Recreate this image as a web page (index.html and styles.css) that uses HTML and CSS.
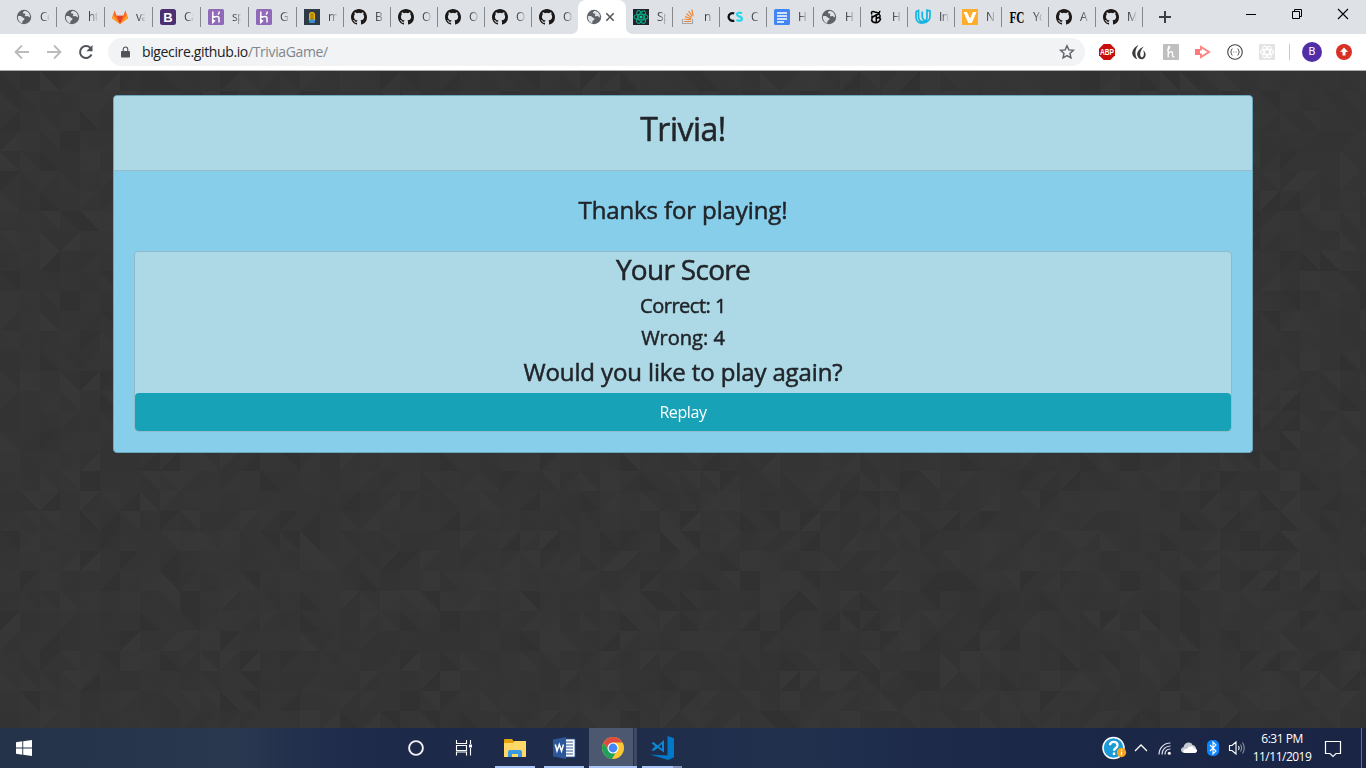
FILE: index.html
```html
<!DOCTYPE html>
<html lang="en">
<head>
<meta charset="utf-8">
<title>Trivia!</title>
<link rel="stylesheet" href="styles.css">
</head>
<body>
<svg class="defs" aria-hidden="true">
  <symbol id="globe" viewBox="0 0 16 16"><circle cx="8" cy="8" r="7.200" fill="#5f6368"/><path d="M2 7.300c2-.5 3.700-.1 4.400.9.700.9 2.200.4 2.100 1.700-.1 1.500-1.800.9-2.100 2.500-.1.800 0 1.200-.3 1.800C3.300 13.300 1.500 10.500 2 7.300zM8.300 2c-.6.600-1.600.9-1.200 1.900.5.900 1.800.3 2.200 1.200.3.900-.8 1.100-.3 1.900.8 1 2.200-.4 3.100.2.700.600.9 1.300 1.800 1.100C14.300 4.600 11.800 2 8.300 2z" fill="#dee1e6"/></symbol>
  <symbol id="github" viewBox="0 0 16 16"><path d="M8 0C3.580 0 0 3.580 0 8c0 3.540 2.290 6.530 5.470 7.590.4.070.55-.17.55-.38v-1.490c-2.010.37-2.530-.49-2.690-.94-.09-.23-.48-.94-.82-1.130-.28-.15-.68-.52-.01-.53.63-.01 1.080.58 1.230.82.72 1.210 1.870.87 2.330.66.070-.52.28-.87.51-1.070-1.780-.2-3.640-.89-3.640-3.950 0-.87.31-1.590.82-2.150-.08-.2-.36-1.020.08-2.120 0 0 .67-.21 2.200.82a7.600 7.600 0 0 1 4 0c1.530-1.040 2.200-.82 2.200-.82.44 1.100.16 1.920.08 2.120.51.560.82 1.270.82 2.150 0 3.070-1.870 3.750-3.650 3.950.29.250.54.730.54 1.480v2.200c0 .21.15.46.55.38A8.010 8.010 0 0 0 16 8c0-4.420-3.580-8-8-8z" fill="#1b1817"/></symbol>
  <symbol id="heroku" viewBox="0 0 16 16"><rect width="16" height="16" rx="1.500" fill="#9069b8"/><path d="M4.800 2.500v6.200c3-1.500 6.200-1.800 6.200.5v4.300M11.300 2.500c0 1.300-.5 2.200-1.300 3M4.700 10.500v3l1.700-1.500z" fill="none" stroke="#fff" stroke-width="1.500"/></symbol>
</svg>

<header class="tabs">
  <div class="tab wide"><svg><use href="#globe"/></svg><span>Co</span></div>
  <div class="tab wide"><svg><use href="#globe"/></svg><span>htt</span></div>
  <div class="tab wide"><svg viewBox="0 0 16 16"><path d="M8 15L0 9.200 2.500 1.200l2.300 5.500h6.400l2.300-5.500L16 9.200z" fill="#fc6d26"/><path d="M8 15L4.800 6.700h6.400z" fill="#e24329"/><path d="M0 9.200l1-3.500L8 15zM16 9.200l-1-3.500L8 15z" fill="#fca326"/></svg><span>va</span></div>
  <div class="tab wide"><svg viewBox="0 0 16 16"><rect width="16" height="16" rx="2.500" fill="#4b2f72"/><text class="glyph" x="8" y="12.500" font-size="13" fill="#fff">B</text></svg><span>Ca</span></div>
  <div class="tab wide"><svg><use href="#heroku"/></svg><span>sp</span></div>
  <div class="tab wide"><svg><use href="#heroku"/></svg><span>G</span></div>
  <div class="tab"><svg viewBox="0 0 16 16"><path d="M0 0h16v16H0z" fill="#2e3a46"/><path d="M5 11V6a3 3 0 0 1 6 0v5z" fill="#f6b800"/><path d="M7 5h2v5H7z" fill="none" stroke="#66591b" stroke-width=".8"/><path d="M4.500 10.500h7l-1 3.500h-5z" fill="#3d8fcb"/></svg><span>m</span></div>
  <div class="tab"><svg><use href="#github"/></svg><span>B</span></div>
  <div class="tab"><svg><use href="#github"/></svg><span>O</span></div>
  <div class="tab"><svg><use href="#github"/></svg><span>O</span></div>
  <div class="tab"><svg><use href="#github"/></svg><span>O</span></div>
  <div class="tab last"><svg><use href="#github"/></svg><span>O</span></div>
  <div class="tab active"><svg><use href="#globe"/></svg><svg class="close" viewBox="0 0 8 8"><path d="M.3.3l7.400 7.400m0-7.400L.3 7.700" stroke="#55595e" stroke-width="1.600"/></svg></div>
  <div class="tab"><svg viewBox="0 0 16 16"><path d="M0 0h16v16H0z" fill="#20232a"/><g fill="none" stroke="#0aa884" stroke-width="1.100"><ellipse cx="8" cy="8" rx="7" ry="2.800"/><ellipse cx="8" cy="8" rx="7" ry="2.800" transform="rotate(60 8 8)"/><ellipse cx="8" cy="8" rx="7" ry="2.800" transform="rotate(120 8 8)"/></g><circle cx="8" cy="8" r="1.500" fill="#0fcf9c"/></svg><span>Sp</span></div>
  <div class="tab"><svg viewBox="0 0 16 16"><path d="M2.500 10v4.500h10V10" fill="none" stroke="#a3a8ae" stroke-width="1.200"/><path d="M4.300 12.500h6.500M4.400 10l6.400.8M5 7.500l6 2.200M6.400 4.700l5.200 3.900M8.600 2.200l3.900 5.300M11.700.5l1.500 6.200" stroke="#f4812a" stroke-width="1.100"/></svg><span>n</span></div>
  <div class="tab"><svg viewBox="0 0 16 16"><path d="M7.200 4.500A3.900 3.900 0 1 0 7.200 11.500" fill="none" stroke="#111" stroke-width="2.300"/><path d="M15 4.300c-1.300-.8-5-1-5 1.200 0 2.500 5 1.800 5 4.200 0 2.400-3.800 2.300-5.500 1.300" fill="none" stroke="#25d5ec" stroke-width="2.200"/></svg><span>C</span></div>
  <div class="tab"><svg viewBox="0 0 16 16"><rect width="16" height="16" rx="1.500" fill="#4285f4"/><path d="M3 4h10M3 7h10M3 10h10M3 13h7" stroke="#fff" stroke-width="1.500"/></svg><span>H</span></div>
  <div class="tab"><svg><use href="#globe"/></svg><span>H</span></div>
  <div class="tab"><svg viewBox="0 0 16 16"><path d="M4 5.500C2.500 3.500 4 2 6 2.700l3.500 1.100c1.500.3 2.500-.5 2.200-2M8.300 5v8M4 6.500v4M4 8.500L8 6l4-1M12 6v2L8 9.500M3.500 10.500c.8 4 7.500 4.500 9-.5L11 8.700" fill="none" stroke="#000" stroke-width="1.500"/></svg><span>H</span></div>
  <div class="tab"><svg viewBox="0 0 16 16"><path d="M1 2.500l2.500-1v6.500c0 3 2 5 4.500 4.500M1 2.500v5.700c0 4 3 6.500 7 5.800 4-.6 7-2.700 7-6.800V2l-3-.9v7.400c0 2.500-1.500 4-4 4M7.200 2.500v4.800c0 2.700 1.500 4.500 4 3.800" fill="none" stroke="#13b5e2" stroke-width="1.700"/></svg><span>In</span></div>
  <div class="tab"><svg viewBox="0 0 16 16"><path d="M0 0h16v16H0z" fill="#fdac2b"/><path d="M1.500 3H5l3 6.500L11 3h3.500L9.800 14H6.300z" fill="#fff"/></svg><span>N</span></div>
  <div class="tab"><svg viewBox="0 0 16 16"><text class="serif" x="8" y="13.500" font-size="17" textLength="15" lengthAdjust="spacingAndGlyphs">FC</text></svg><span>Yo</span></div>
  <div class="tab"><svg><use href="#github"/></svg><span>A</span></div>
  <div class="tab"><svg><use href="#github"/></svg><span>M</span></div>
  <svg class="newtab" viewBox="0 0 12 12"><path d="M6 0v12M0 6h12" stroke="#3c4043" stroke-width="2"/></svg>
  <div class="window-buttons">
    <svg viewBox="0 0 10 10"><path d="M0 5.500h10" stroke="#000"/></svg>
    <svg viewBox="0 0 10 10"><path d="M.5 2.500h7v7h-7zM2.500 2.500v-2h7v7h-2" fill="none" stroke="#000"/></svg>
    <svg viewBox="0 0 10 10"><path d="M0 0l10 10M10 0L0 10" stroke="#000" stroke-width="1.100"/></svg>
  </div>
</header>

<nav class="toolbar">
  <svg class="nav-icon" viewBox="0 0 16 16"><path d="M15 8H2M8 1.500L1.500 8 8 14.500" fill="none" stroke="#b9bbbd" stroke-width="1.800"/></svg>
  <svg class="nav-icon" viewBox="0 0 16 16"><path d="M1 8h13M8 1.500L14.500 8 8 14.500" fill="none" stroke="#b9bbbd" stroke-width="1.800"/></svg>
  <svg class="nav-icon" viewBox="0 0 16 16"><path d="M13.500 10.500A6 6 0 1 1 12.300 3.800" fill="none" stroke="#505459" stroke-width="2"/><path d="M14.500 1v6.300H8.300z" fill="#505459"/></svg>
  <div class="omnibox">
    <svg class="lock" viewBox="0 0 10 12"><path d="M1 4.800h8q1 0 1 1V11q0 1-1 1H1q-1 0-1-1V5.800q0-1 1-1z" fill="#505459"/><path d="M2.500 5V3a2.500 2.500 0 0 1 5 0v2" fill="none" stroke="#505459" stroke-width="1.200"/></svg>
    <span class="url">bigecire.github.io<em>/TriviaGame/</em></span>
    <svg class="star" viewBox="0 0 16 16"><path d="M8 1.700l1.850 4.200 4.550.45-3.400 3.050.95 4.500L8 11.600l-3.950 2.300.95-4.500L1.600 6.350l4.550-.45z" fill="none" stroke="#5f6368" stroke-width="1.400"/></svg>
  </div>
  <div class="extensions">
    <svg viewBox="0 0 16 16"><path d="M4.700 0h6.600L16 4.700v6.600L11.300 16H4.700L0 11.300V4.700z" fill="#c70d0d"/><text class="glyph" x="8" y="11" font-size="8.500" fill="#fff" textLength="14" lengthAdjust="spacingAndGlyphs">ABP</text></svg>
    <svg viewBox="0 0 16 16"><path d="M7.500 1C3.500 3 .8 6.500 1.300 10c.4 2.500 2.500 4.500 5 5.300C3.500 10.500 3.800 5.500 7.500 1zM12.800 2.500C7.500 4.800 5.300 8.800 6.500 12c.8 2.500 3.500 4 5.500 3 3.500-1.800 3.500-6.500.2-8.500 1.300 3 .8 6.300-1.200 7C8.300 12.500 8.500 7 12.800 2.500z" fill="#3a3b3d"/></svg>
    <svg viewBox="0 0 16 16"><rect width="16" height="16" rx="1" fill="#bfbfbf"/><path d="M4 6.500c2-1 3.200-3 2.500-4S5 4 5.200 7v6.500M5.200 10c2-3 4.300-3.300 4.300-.5 0 2-.5 4 2 3" fill="none" stroke="#fff" stroke-width="1.300"/></svg>
    <svg viewBox="0 0 16 16"><path d="M0 5h5v6H0z" fill="#ff7b7b"/><path d="M6 6.500V3l8 5-8 5V9.500" fill="none" stroke="#ff8585" stroke-width="2"/></svg>
    <svg viewBox="0 0 16 16"><circle cx="8" cy="8" r="7.300" fill="#fff" stroke="#42474b" stroke-width="1.100"/><path d="M5.500 4.800c-1.300 0-1 1.500-1.200 2.300L3.500 8l.8.900c.2.800-.1 2.300 1.200 2.300M10.500 4.800c1.300 0 1 1.500 1.200 2.300l.8.900-.8.900c-.2.800.1 2.300-1.200 2.300M6.500 8h.7M8.800 8h.7" fill="none" stroke="#42474b"/></svg>
    <svg viewBox="0 0 16 16"><path d="M0 0h16v16H0z" fill="#e4e4e4"/><g fill="none" stroke="#fff" stroke-width="1.100"><ellipse cx="8" cy="8" rx="6.500" ry="2.600"/><ellipse cx="8" cy="8" rx="6.500" ry="2.600" transform="rotate(60 8 8)"/><ellipse cx="8" cy="8" rx="6.500" ry="2.600" transform="rotate(120 8 8)"/></g></svg>
  </div>
  <i class="rule"></i>
  <div class="avatar">B</div>
  <svg class="update" viewBox="0 0 16 16"><circle cx="8" cy="8" r="8" fill="#d93025"/><path d="M8 3.500l4 4.500H9.500v3.500h-3V8H4z" fill="#fff"/></svg>
</nav>

<main class="page">
  <canvas class="pattern" width="1366" height="657"></canvas>
  <section class="card">
    <div class="card-header"><h2>Trivia!</h2></div>
    <div class="card-body">
      <h4 class="thanks">Thanks for playing!</h4>
      <div class="score">
        <h3>Your Score</h3>
        <h5 class="correct">Correct: 1</h5>
        <h5 class="wrong">Wrong: 4</h5>
        <h4 class="again">Would you like to play again?</h4>
        <button>Replay</button>
      </div>
    </div>
  </section>
</main>

<footer class="taskbar">
  <svg class="start" viewBox="0 0 16 16"><path d="M0 2.200L6.300 1.300v6.200H0zM7.200 1.200L16 0v7.500H7.200zM0 8.500h6.300v6.200L0 13.800zM7.200 8.500H16V16l-8.800-1.200z" fill="#fff"/></svg>
  <div class="apps">
    <div class="app"><svg viewBox="0 0 24 24"><circle cx="12" cy="12" r="6.900" fill="none" stroke="#f4f5f7" stroke-width="1.900"/></svg></div>
    <div class="app"><svg viewBox="0 0 24 24"><path d="M4.500 4v3.500h10V4M4.500 19.500V16h10v3.500M4.500 9.500h10v5h-10zM18.500 4v4M18.500 12v7.500" fill="none" stroke="#fff" stroke-width="1.100"/><path d="M17 8.500h3v3h-3z" fill="#fff"/></svg></div>
    <div class="app open"><svg viewBox="0 0 24 24"><path d="M1 4q0-1 1-1h7l1.500 2H23v16H1z" fill="#e5a50a"/><path d="M1 7h9l2-2h11v15q0 1-1 1H2q-1 0-1-1z" fill="#ffd868"/><path d="M5 21v-5q0-2 2-2h10q2 0 2 2v5h-4v-3H9v3z" fill="#3a9ae0"/></svg></div>
    <div class="app open"><svg viewBox="0 0 24 24"><path d="M11 3h12v18H11z" fill="#fff" stroke="#2b579a" stroke-width=".8"/><path d="M14 6h7M14 9h7M14 12h7M14 15h7M14 18h7" stroke="#2b579a" stroke-width="1.200"/><path d="M1 3.500L14 1v22L1 20.500z" fill="#2b579a"/><path d="M3.300 8.500L5 15l2.300-6.500L9.500 15l2-6.500" fill="none" stroke="#fff" stroke-width="1.500"/></svg></div>
    <div class="app current"><svg viewBox="0 0 24 24"><circle cx="12" cy="12" r="11" fill="#fbc834"/><path d="M2.470 6.500A11 11 0 0 0 11 23l5-8.500-8.500-.5z" fill="#1fa15d"/><path d="M2.470 6.500A11 11 0 0 1 21.500 6.500H12L7 13z" fill="#dd4b3e"/><circle cx="12" cy="12" r="5.500" fill="#fff"/><circle cx="12" cy="12" r="4.400" fill="#4486f5"/></svg></div>
    <div class="app code"><svg viewBox="0 0 24 24"><path d="M17.500 0L24 2.200v19L18 24 0 18.500l17.500 1z" fill="#0079c8"/><path d="M1.500 7l2-1 4.300 3.500L14 4v12.500L7.800 12 3.500 15l-2-1 3.800-3.500zM12 7.800L9 10.500l3 2.500z" fill="#0f87d6" fill-rule="evenodd"/></svg></div>
  </div>
  <div class="tray">
    <svg viewBox="0 0 24 24"><circle cx="11.500" cy="12" r="10.500" fill="#1b9ad6" stroke="#fff" stroke-width="1.500"/><path d="M8 9.300c0-4.500 7.500-4.500 7.500 0 0 3-3.500 2.500-3.500 5.500M12 16.500v2.500" fill="none" stroke="#fff" stroke-width="2.300"/><circle cx="19.500" cy="16.500" r="4.700" fill="#f2a51c"/><path d="M19.500 13.500v1.300m0 1v3.500" stroke="#fff" stroke-width="1.300"/></svg>
    <svg viewBox="0 0 24 24"><path d="M6 15l6-6 6 6" fill="none" stroke="#fff" stroke-width="1.300"/></svg>
    <svg viewBox="0 0 24 24"><g fill="none" stroke="#dfe3ea" stroke-width="1.200"><path d="M6 18.500C6 12 11 7 17.500 7"/><path d="M9 18.500c0-5 3.500-8.500 8.500-8.500"/><path d="M12 18.500c0-3.500 2-5.500 5.500-5.500"/></g><circle cx="16.300" cy="17.300" r="1.500" fill="#fff"/></svg>
    <svg viewBox="0 0 24 24"><path d="M8 17c-5 0-5-5.500-1.500-5.800C7 6 14 5 15.500 9c4 0 6 8 1 8z" fill="#c4c8cf"/><path d="M8 17c-3-1-2-4.500 2-4 2-4 7-3.300 7.500-.2 3.500 0 3.500 4.200 0 4.200z" fill="#fff"/></svg>
    <svg viewBox="0 0 24 24"><rect x="6" y="4" width="12" height="16" rx="5" fill="#0a84ff"/><path d="M9 9l6 6-3 3V6l3 3-6 6" fill="none" stroke="#fff" stroke-width="1.100"/></svg>
    <svg viewBox="0 0 24 24"><path d="M4.500 9.500h2.500l4-3.500v12l-4-3.500H4.500zM13.500 10q1.300 2 0 4" fill="none" stroke="#fff" stroke-width="1.100"/><path d="M15.500 8.500q2.200 3.500 0 7M17.500 6.500q3.500 5.500 0 11" fill="none" stroke="#8690a4" stroke-width="1.100"/></svg>
  </div>
  <div class="clock"><span class="time">6:31 PM</span><span>11/11/2019</span></div>
  <svg class="notice" viewBox="0 0 18 18"><path d="M1.500 1.500h15v12H12l-3 3-3-3H1.500z" fill="none" stroke="#fff" stroke-width="1.200"/></svg>
  <i class="peek"></i>
</footer>
<script src="pattern.js"></script>
</body>
</html>
```
FILE: styles.css
```css
* { box-sizing: border-box; }
body {
  margin: 0;
  width: 1366px;
  height: 768px;
  overflow: hidden;
  display: flex;
  flex-direction: column;
  font-family: "Open Sans", "Noto Sans", sans-serif;
  color: #212529;
  background: #343434;
}
svg { display: block; flex: none; overflow: visible; }
.defs { position: absolute; width: 0; height: 0; }
.glyph { font-family: "Liberation Sans", sans-serif; font-weight: 700; text-anchor: middle; }
.serif { font-family: "Liberation Serif", serif; font-weight: 700; text-anchor: middle; }

.tabs { flex: none; height: 34px; padding-left: 9px; display: flex; background: #dee1e6; }
.tab { width: 47px; height: 34px; padding: 9px 0 0 7px; display: flex; flex: none; gap: 8px; position: relative; }
.tab.wide { width: 48px; }
.tab svg { width: 16px; height: 16px; }
.tab span {
  width: 9px;
  height: 16px;
  overflow: hidden;
  white-space: nowrap;
  font-size: 12px;
  line-height: 16px;
  letter-spacing: -.6px;
  color: #3c4043;
  -webkit-mask-image: linear-gradient(90deg, #000 20%, rgba(0,0,0,.15));
  mask-image: linear-gradient(90deg, #000 20%, rgba(0,0,0,.15));
}
.tab::after { content: ""; position: absolute; right: 0; top: 7px; width: 1px; height: 20px; background: #85888c; }
.tab.last::after, .tab.active::after { display: none; }
.tab.active { background: #fff; border-radius: 8px 8px 0 0; width: 48px; margin: 0 0 0 -1px; padding-left: 8px; gap: 4px; }
.tab.active::before {
  content: "";
  position: absolute;
  left: -6px;
  right: -6px;
  bottom: 0;
  height: 6px;
  background:
    radial-gradient(circle at 0 0, transparent 5.500px, #fff 6px) left / 6px 6px no-repeat,
    radial-gradient(circle at 100% 0, transparent 5.500px, #fff 6px) right / 6px 6px no-repeat;
}
.tab .close { width: 8px; height: 8px; margin-top: 4px; }
.newtab { width: 12px; height: 12px; margin: 11px 0 0 16px; }
.window-buttons { margin: 9px 18px 0 auto; display: flex; gap: 36px; }
.window-buttons svg { width: 10px; height: 10px; }

.toolbar { flex: none; height: 37px; display: flex; align-items: center; padding-left: 14px; background: #fff; border-bottom: 1px solid #a9aaab; }
.nav-icon { width: 16px; height: 16px; margin-right: 16px; }
.omnibox { width: 977px; height: 28px; margin-left: -2px; padding: 0 10px 0 13px; border-radius: 14px; background: #f1f3f4; display: flex; align-items: center; }
.lock { width: 9px; height: 12px; }
.url { margin-left: 12px; margin-top: -1px; font-size: 14px; letter-spacing: -.37px; color: #202124; white-space: nowrap; }
.url em { font-style: normal; color: #80868b; }
.star { width: 16px; height: 16px; margin-left: auto; }
.extensions { display: flex; gap: 16px; margin-left: 14px; }
.extensions svg, .update { width: 16px; height: 16px; }
.rule { width: 1px; height: 16px; background: #c6c8ca; margin: 0 12px 0 14px; }
.avatar { width: 20px; height: 20px; border-radius: 50%; background: #512da8; color: #fff; font: 11px/20px Roboto, sans-serif; text-align: center; margin-right: 14px; }

.page { flex: 1; padding-top: 24px; position: relative; }
.pattern { position: absolute; left: 0; top: 0; }
.card { position: relative; width: 1140px; margin: 0 auto; border: 1px solid #6ea6bd; border-radius: 4px; background: #87ceeb; text-align: center; overflow: hidden; }
.card-header { height: 75px; padding-top: 14px; background: #add8e6; border-bottom: 1px solid #97bdc9; }
h2, h3, h4, h5 { margin: 0; font-weight: 500; white-space: nowrap; -webkit-text-stroke: .5px #212529; }
h2 { font-size: 32px; line-height: 38px; letter-spacing: -.5px; }
h3 { font-size: 28px; line-height: 34px; margin-bottom: 8px; letter-spacing: -.7px; }
h4 { font-size: 24px; line-height: 29px; letter-spacing: -.12px; }
h5 { font-size: 20px; line-height: 24px; margin-bottom: 8px; }
.correct { letter-spacing: -.5px; }
.wrong { margin-bottom: 7px; }
.card-body { padding: 24px 20px 20px; }
.thanks { margin-bottom: 27px; }
.score { background: #add8e6; border: 1px solid #8fbccb; border-radius: 4px; }
.again { margin-bottom: 7px; }
button { display: block; width: 100%; height: 38px; padding: 0; border: 0; border-radius: 4px; background: #17a2b8; color: #fff; font: 16px/38px "Open Sans", "Noto Sans", sans-serif; letter-spacing: -.4px; }

.taskbar {
  flex: none;
  height: 40px;
  display: flex;
  align-items: center;
  padding-left: 16px;
  position: relative;
  background: linear-gradient(90deg, #243349 0, #29374f 240px, #202d4c 320px, #1d2949 420px, #1f2d4b 640px, #20304d 800px, #1c2848 1000px, #1a2545 100%);
}
.start { width: 16px; height: 16px; }
.apps { display: flex; margin-left: 360px; height: 40px; }
.app { width: 48px; height: 40px; display: flex; justify-content: center; align-items: center; margin-right: 1px; position: relative; }
.app:first-child { margin-right: 0; }
.app:nth-child(2) { margin-right: 3px; }
.app svg { width: 24px; height: 24px; }
.app.open::after, .app.current::after, .code::after { content: ""; position: absolute; bottom: 0; left: 4px; width: 40px; height: 2px; background: #a9c4f8; }
.app.current { background: linear-gradient(90deg, #4c5870 44px, #26324d 44px, #26324d 45px, #3d4963 45px); }
.app.current::after { left: 0; width: 48px; }
.app.code::after { background: linear-gradient(90deg, #a9c4f8 31px, #8292b8 31px); }
.tray { display: flex; margin-left: auto; }
.tray svg { width: 24px; height: 24px; }
.tray svg:first-child { margin-right: 3px; }
.clock { width: 66px; display: flex; flex-direction: column; align-items: center; color: #fff; font-size: 12px; line-height: 18px; letter-spacing: -.5px; white-space: nowrap; }
.time { letter-spacing: -.5px; }
.notice { width: 18px; height: 18px; margin: 2px 19px 0 9px; }
.peek { width: 1px; height: 40px; background: #66708a; margin-right: 4px; }
```
FILE: pattern.js
```js
// Tiles the page backdrop with 20px squares split into faint triangles.
const canvas = document.querySelector('.pattern');
const ctx = canvas.getContext('2d');
const size = 20;
const shades = [49, 51, 51, 52, 52, 52, 53, 53, 54, 55];
let seed = 4711;

function random() {
  seed = (seed * 1664525 + 1013904223) % 4294967296;
  return seed / 4294967296;
}

function shade() {
  const level = shades[Math.floor(random() * shades.length)];
  return `rgb(${level},${level},${level})`;
}

for (let y = 0; y < canvas.height; y += size) {
  for (let x = 0; x < canvas.width; x += size) {
    ctx.fillStyle = shade();
    ctx.fillRect(x, y, size, size);
    const rising = random() < 0.5;
    ctx.fillStyle = shade();
    ctx.beginPath();
    ctx.moveTo(x, rising ? y + size : y);
    ctx.lineTo(x + size, rising ? y : y + size);
    ctx.lineTo(x + size, rising ? y + size : y);
    ctx.fill();
  }
}
```
